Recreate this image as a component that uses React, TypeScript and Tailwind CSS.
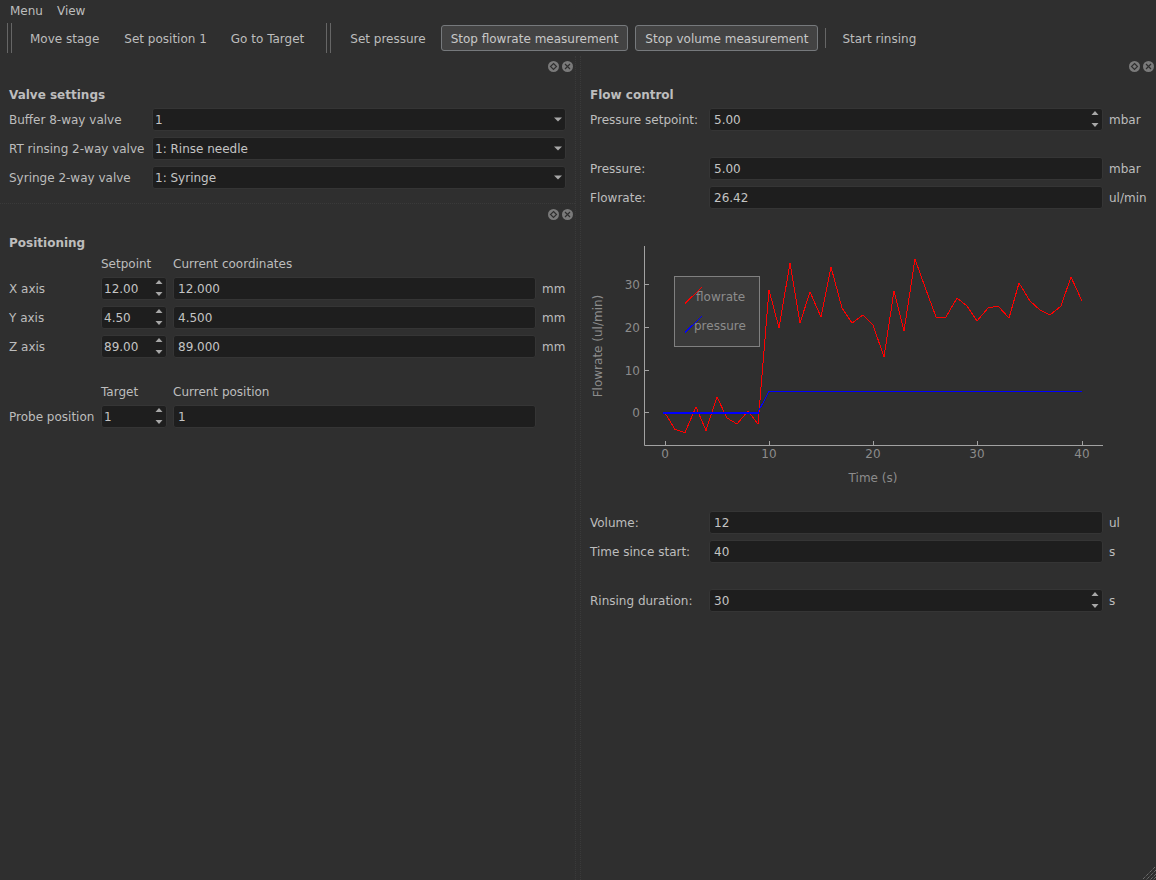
import React from 'react';

const flowrate = [
  [665, 413], [675, 429.5], [685, 432.5], [696, 407], [706, 430.5], [717, 397], [727, 418], [737, 424], [748, 411], [758, 424],
  [769, 290], [779, 328], [790, 263], [800, 323], [810, 292], [821, 317], [831, 267], [842, 308], [852, 323], [863, 315],
  [873, 325], [884, 357], [894, 291], [904, 331], [915, 259], [925, 287], [936, 317], [946, 317], [957, 298], [967, 306],
  [977, 321], [988, 308], [998, 306], [1009, 318], [1019, 283], [1030, 301], [1040, 310], [1050, 315], [1061, 306], [1071, 277], [1082, 301],
];

function SpinArrows() {
  return (
    <svg width="8" height="19" viewBox="0 0 8 19" className="shrink-0">
      <path d="M0.5 5 L4 1 L7.5 5 Z" fill="#a8a8a8" />
      <path d="M0.5 13 L7.5 13 L4 17 Z" fill="#a8a8a8" />
    </svg>
  );
}

function Field({ value, className = '', pad = 'pl-[5px]' }: { value: string; className?: string; pad?: string }) {
  return (
    <div className={`h-[23px] bg-[#1e1e1e] border border-[#353535] rounded-[3px] flex items-center ${pad} ${className}`}>
      <span className="text-[#c4c4c4]">{value}</span>
    </div>
  );
}

function Spin({ value, className = '', pad = 'pl-[2px]' }: { value: string; className?: string; pad?: string }) {
  return (
    <div className={`h-[23px] bg-[#1e1e1e] border border-[#353535] rounded-[3px] flex items-center justify-between pr-[3px] ${pad} ${className}`}>
      <span className="text-[#c4c4c4]">{value}</span>
      <SpinArrows />
    </div>
  );
}

function Combo({ value }: { value: string }) {
  return (
    <div className="h-[23px] w-[414px] bg-[#1e1e1e] border border-[#353535] rounded-[3px] flex items-center justify-between pl-[2px] pr-[3px]">
      <span className="text-[#c4c4c4]">{value}</span>
      <svg width="8" height="5" viewBox="0 0 8 5">
        <path d="M0 0.5 L8 0.5 L4 4.5 Z" fill="#a8a8a8" />
      </svg>
    </div>
  );
}

function DockButtons() {
  return (
    <div className="h-5 flex items-center justify-end gap-[3px]">
      <svg width="11" height="11" viewBox="0 0 11 11">
        <circle cx="5.5" cy="5.5" r="5.5" fill="#7a7a7a" />
        <path d="M5.5 2.5 L8.5 5.5 L5.5 8.5 L2.5 5.5 Z" fill="none" stroke="#2f2f2f" strokeWidth="1.2" />
      </svg>
      <svg width="11" height="11" viewBox="0 0 11 11">
        <circle cx="5.5" cy="5.5" r="5.5" fill="#7a7a7a" />
        <path d="M3 3 L8 8 M8 3 L3 8" fill="none" stroke="#2f2f2f" strokeWidth="1.2" />
      </svg>
    </div>
  );
}

function Grip({ className = '' }: { className?: string }) {
  return (
    <div className={`h-[30px] w-[5px] shrink-0 border-x border-[#666666] ${className}`} />
  );
}

function ToolButton({ label, active = false, className = '' }: { label: string; active?: boolean; className?: string }) {
  return (
    <div
      className={`h-[26px] px-[9px] pt-px flex items-center rounded-[3px] border whitespace-nowrap ${
        active ? 'bg-[#434343] border-[#76797c] text-[#c8c8c8]' : 'border-transparent text-[#bdbdbd]'
      } ${className}`}
    >
      {label}
    </div>
  );
}

function Row({ label, children, unit }: { label: string; children: React.ReactNode; unit?: string }) {
  return (
    <div className="flex items-center h-[23px]">
      <div className="w-[119px] shrink-0">{label}</div>
      {children}
      {unit && <div className="ml-[6px]">{unit}</div>}
    </div>
  );
}

function Title({ text, className = '' }: { text: string; className?: string }) {
  return <div className={`font-bold h-[14px] flex items-center ${className}`}>{text}</div>;
}

function ColHead({ text }: { text: string }) {
  return <div className="h-[12px] pt-px mb-[2px] flex items-center whitespace-nowrap">{text}</div>;
}

function Chart() {
  const axis = '#a2a2a2';
  const label = '#8c8c8c';
  return (
    <svg width="566" height="250" viewBox="590 240 566 250" className="block" fontFamily="'DejaVu Sans', sans-serif" fontSize="12">
      <path d="M644.5 246 V445.5 H1103" fill="none" stroke={axis} />
      {[665, 769, 873, 977, 1082].map((x, i) => (
        <g key={x}>
          <path d={`M${x + 0.5} 441 V445`} stroke={axis} />
          <text x={x} y={458} textAnchor="middle" fill={label}>{i * 10}</text>
        </g>
      ))}
      {[[412, '0'], [370, '10'], [327, '20'], [284, '30']].map(([y, t]) => (
        <g key={t}>
          <path d={`M645 ${Number(y) + 0.5} H649`} stroke={axis} />
          <text x={640} y={Number(y) + 4.5} textAnchor="end" fill={label}>{t}</text>
        </g>
      ))}
      <text x={873} y={482} textAnchor="middle" fill={label}>Time (s)</text>
      <text transform="translate(602 346) rotate(-90)" textAnchor="middle" fill={label}>Flowrate (ul/min)</text>

      <polyline points={flowrate.map((p) => p.join(',')).join(' ')} fill="none" stroke="#ff0000" shapeRendering="crispEdges" />
      <path d="M663 412.5 H759" stroke="#0000ff" strokeWidth="2" shapeRendering="crispEdges" />
      <path d="M758 412 L769 391.5 H1082" fill="none" stroke="#0000ff" shapeRendering="crispEdges" />

      <rect x="674.5" y="276.5" width="85" height="70" fill="#3a3a3a" stroke="#808080" />
      <text x="696" y="301" fill={label}>flowrate</text>
      <text x="694" y="330" fill={label}>pressure</text>
      <path d="M685 303.5 L701.5 287.5" stroke="#ff0000" shapeRendering="crispEdges" />
      <path d="M685 332.5 L701.5 316.5" stroke="#0000ff" shapeRendering="crispEdges" />
    </svg>
  );
}

export default function App() {
  return (
    <div className="w-[1156px] h-[880px] relative overflow-hidden bg-[#2f2f2f] text-[#bdbdbd] text-[12px] leading-none font-['DejaVu_Sans',sans-serif]">
      {/* menu */}
      <div className="h-5 pt-px flex items-center pl-[10px] gap-[14px]">
        <span>Menu</span>
        <span>View</span>
      </div>

      {/* toolbar */}
      <div className="h-9 flex items-center pl-[7px]">
        <Grip className="mr-[8px]" />
        <ToolButton label="Move stage" />
        <ToolButton label="Set position 1" className="ml-[5px]" />
        <ToolButton label="Go to Target" className="ml-[4px]" />
        <Grip className="ml-[12px] mr-[9px]" />
        <ToolButton label="Set pressure" />
        <ToolButton label="Stop flowrate measurement" active className="ml-[5px]" />
        <ToolButton label="Stop volume measurement" active className="ml-[7px]" />
        <div className="h-[20px] w-px bg-[#666666] ml-[7px] mr-[6px]" />
        <ToolButton label="Start rinsing" />
      </div>

      <div className="flex">
        {/* left docks */}
        <div className="w-[575px] shrink-0">
          <div className="pr-[2px]"><DockButtons /></div>
          <div className="pl-[9px] pt-[12px] h-[128px] border-b border-dotted border-[#3a3a3a]">
            <Title text="Valve settings" className="mb-[6px]" />
            <div className="flex flex-col gap-[6px]">
              {[
                ['Buffer 8-way valve', '1'],
                ['RT rinsing 2-way valve', '1: Rinse needle'],
                ['Syringe 2-way valve', '1: Syringe'],
              ].map(([label, value]) => (
                <div key={label} className="flex items-center">
                  <div className="w-[143px] shrink-0">{label}</div>
                  <Combo value={value} />
                </div>
              ))}
            </div>
          </div>

          <div className="pr-[2px]"><DockButtons /></div>
          <div className="pl-[9px] pt-[12px]">
            <Title text="Positioning" className="mb-[7px]" />
            <div className="grid grid-cols-[86px_66px_363px_auto] gap-x-[6px] gap-y-[6px] items-center">
              <div />
              <ColHead text="Setpoint" />
              <ColHead text="Current coordinates" />
              <div />
              {[
                ['X axis', '12.00', '12.000'],
                ['Y axis', '4.50', '4.500'],
                ['Z axis', '89.00', '89.000'],
              ].map(([axis, setpoint, current]) => (
                <React.Fragment key={axis}>
                  <div>{axis}</div>
                  <Spin value={setpoint} />
                  <Field value={current} pad="pl-[4px]" />
                  <div>mm</div>
                </React.Fragment>
              ))}
              <div />
              <div className="mt-[21px]"><ColHead text="Target" /></div>
              <div className="mt-[21px]"><ColHead text="Current position" /></div>
              <div />
              <div className="whitespace-nowrap">Probe position</div>
              <Spin value="1" />
              <Field value="1" pad="pl-[4px]" />
              <div />
            </div>
          </div>
        </div>

        {/* splitter between the docks */}
        <div className="w-[6px] shrink-0 border-x border-dotted border-[#3a3a3a] min-h-[824px]" />

        {/* right dock */}
        <div className="flex-1">
          <div className="pr-[2px]"><DockButtons /></div>
          <div className="pl-[9px] pt-[12px]">
            <Title text="Flow control" className="mb-[6px]" />
            <Row label="Pressure setpoint:" unit="mbar">
              <Spin value="5.00" className="w-[394px]" pad="pl-[4px]" />
            </Row>
            <div className="mt-[26px] flex flex-col gap-[6px]">
              <Row label="Pressure:" unit="mbar"><Field value="5.00" className="w-[394px]" pad="pl-[4px]" /></Row>
              <Row label="Flowrate:" unit="ul/min"><Field value="26.42" className="w-[394px]" pad="pl-[4px]" /></Row>
            </div>
          </div>
          <div className="mt-[31px] ml-[9px]"><Chart /></div>
          <div className="pl-[9px] mt-[21px] flex flex-col gap-[6px]">
            <Row label="Volume:" unit="ul"><Field value="12" className="w-[394px]" pad="pl-[4px]" /></Row>
            <Row label="Time since start:" unit="s"><Field value="40" className="w-[394px]" pad="pl-[4px]" /></Row>
            <div className="mt-[20px]">
              <Row label="Rinsing duration:" unit="s"><Spin value="30" className="w-[394px]" pad="pl-[4px]" /></Row>
            </div>
          </div>
        </div>
      </div>

      {/* size grip */}
      <svg width="14" height="14" viewBox="0 0 14 14" className="absolute right-0 bottom-0">
        <path d="M13 1 L1 13 M14 4 L4 14 M14 8 L8 14 M14 11 L11 14" stroke="#8a8a8a" strokeDasharray="1 1" />
      </svg>
    </div>
  );
}
